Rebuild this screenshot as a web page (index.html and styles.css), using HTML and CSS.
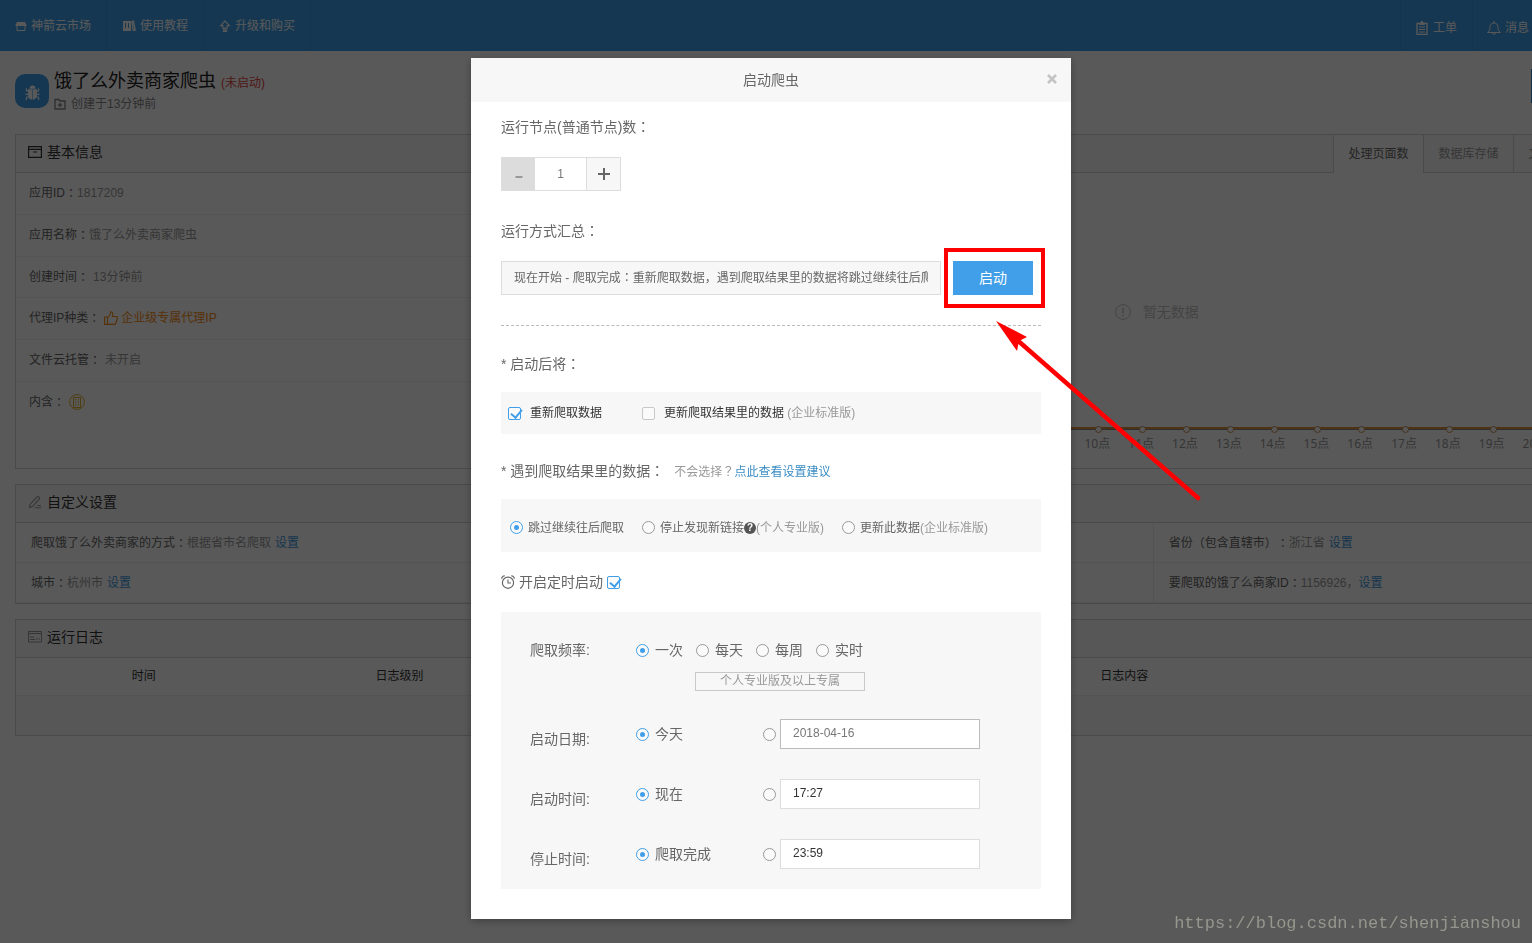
FILE: index.html
```html
<!DOCTYPE html>
<html lang="zh-CN">
<head>
<meta charset="utf-8">
<title>启动爬虫</title>
<link rel="stylesheet" href="styles.css">
</head>
<body>
<div class="page">
  <nav class="nav">
    <a class="nav-item" href="#"><svg class="i12" viewBox="0 0 12 12"><path fill="currentColor" d="M2 2h8l1.500 3v1h-11v-1z"/><path fill="none" stroke="currentColor" d="M2 6v4.500h8V6"/></svg>神箭云市场</a>
    <a class="nav-item" href="#"><svg class="i14" viewBox="0 0 14 14"><path fill="currentColor" fill-rule="evenodd" d="M1 2h8v10H1zM3 4v5h1V4zM6 4v5h1V4z"/><path fill="none" stroke="currentColor" stroke-width="1.400" d="M10 2.500l1.500-.3L13.200 11l-2 .5zM2 10.500h6"/></svg>使用教程</a>
    <a class="nav-item" href="#"><svg class="i12" viewBox="0 0 12 14"><path fill="none" stroke="currentColor" stroke-width="1.300" d="M6 1L1 6.500h2.500v3h5v-3H11zM3.500 11.500h5M3.500 13.300h5"/></svg>升级和购买</a>
    <a class="nav-item nav-right nav-first" href="#"><svg class="i14" viewBox="0 0 14 14"><path fill="none" stroke="currentColor" stroke-width="1.300" d="M2 2.500h10v10.800H2z"/><path fill="currentColor" d="M4.500 1.500h1.500V0h2v1.500h1.500V4h-5z"/><path stroke="currentColor" d="M4 6h6M4 8.500h6M4 11h6"/></svg>工单</a>
    <a class="nav-item nav-right" href="#"><svg class="i14" viewBox="0 0 14 14"><path fill="none" stroke="currentColor" d="M.5 11.500h13c-2-1.500-2.500-3-2.500-5 0-2.700-1.500-4.500-4-4.500s-4 1.800-4 4.500c0 2-.5 3.500-2.500 5zM7 0v2M5.500 12c0 2 3 2 3 0"/></svg>消息</a>
    <span class="nav-rest"></span>
  </nav>

  <header class="app-head">
    <span class="app-icon"><svg viewBox="0 0 16 18"><path fill="currentColor" d="M4.800 5a3.200 3.600 0 0 1 6.400 0zM3.200 5.600h4.500v11.200C4.800 16.600 3.200 14.500 3.200 11.500zM8.300 5.600h4.500v5.900c0 3-1.600 5.100-4.500 5.300z"/><path fill="none" stroke="currentColor" stroke-width="1.200" d="M1.500 4.500v2.800H4M.5 11h3M1.500 17v-2.700L4 13.500M14.500 4.500v2.800H12M15.500 11h-3M14.500 17v-2.700L12 13.500"/></svg></span>
    <div class="app-text">
      <h1>饿了么外卖商家爬虫<small>(未启动)</small></h1>
      <p><svg class="i12" viewBox="0 0 12 12"><path fill="none" stroke="currentColor" stroke-width="1.400" d="M1 1.500h4l1 1.500h5v8H1zM6 5v4M4 7h4"/></svg>创建于13分钟前</p>
    </div>
    <button class="app-btn" type="button" aria-label="启动"></button>
  </header>

  <section class="panel split">
    <div class="info">
      <h2 class="bar"><svg class="i14" viewBox="0 0 14 12"><path fill="none" stroke="currentColor" stroke-width="1.200" d="M.6.6h12.800v10.800H.6zM.6 3.400h12.800M5 6h4"/></svg>基本信息</h2>
      <ul class="facts">
        <li>应用ID<b lang="zh-TW">：</b><span>1817209</span></li>
        <li>应用名称<b lang="zh-TW">：</b><span>饿了么外卖商家爬虫</span></li>
        <li>创建时间<b lang="zh-TW">：</b><span class="sp">13分钟前</span></li>
        <li>代理IP种类<b lang="zh-TW">：</b><em class="sp"><svg class="i14" viewBox="0 0 14 14"><path fill="none" stroke="currentColor" stroke-width="1.100" d="M.6 6h3v7.400h-3zM3.600 6.500C6 5 6.500 3.500 6.800.8c2.500 0 2.200 3 1.600 4.700h4.200c1.200 0 .8 1.500.4 3l-1 3.500c-.3 1-.8 1.400-1.800 1.400H3.600"/></svg>企业级专属代理IP</em></li>
        <li>文件云托管<b lang="zh-TW">：</b><span class="sp">未开启</span></li>
        <li>内含<b lang="zh-TW">：</b><svg class="i16 gold sp" viewBox="0 0 16 16"><circle cx="8" cy="8" r="7.400" fill="none" stroke="currentColor"/><path fill="none" stroke="currentColor" d="M4.500 3.500h7v10h-7z"/><path stroke="currentColor" stroke-dasharray="1.500 1" d="M6.700 5v7M9.300 5v7"/></svg></li>
      </ul>
    </div>
    <div class="chart">
      <div class="bar tabs">
        <button class="tab on" type="button">处理页面数</button>
        <button class="tab" type="button">数据库存储</button>
        <button class="tab" type="button">文件云托管</button>
        <span class="tab-rest"></span>
      </div>
      <p class="nodata"><svg viewBox="0 0 16 16"><circle cx="8" cy="8" r="7.400" fill="none" stroke="currentColor"/><path stroke="currentColor" stroke-width="1.500" d="M8 4v5.500M8 11v1.500"/></svg>暂无数据</p>
      <ol class="axis">
        <li>0点</li><li>1点</li><li>2点</li><li>3点</li><li>4点</li><li>5点</li><li>6点</li><li>7点</li><li>8点</li><li>9点</li><li>10点</li><li>11点</li><li>12点</li><li>13点</li><li>14点</li><li>15点</li><li>16点</li><li>17点</li><li>18点</li><li>19点</li><li>20点</li><li>21点</li><li>22点</li><li>23点</li>
      </ol>
    </div>
  </section>

  <section class="panel">
    <h2 class="bar"><svg class="i14 soft" viewBox="0 0 14 14"><path fill="none" stroke="currentColor" stroke-width="1.100" d="M1.500 12.500L2 9.500 9 1.800c1-1 3.300.8 2.400 2L4.500 11.500zM7 12.700h6M9 10.500h4"/></svg>自定义设置</h2>
    <div class="settings">
      <p>爬取饿了么外卖商家的方式<b lang="zh-TW">：</b><span>根据省市名爬取</span><a class="sp" href="#">设置</a></p>
      <p></p>
      <p>省份<b lang="zh-TW">（</b>包含直辖市<b lang="zh-TW">）：</b><span>浙江省</span><a class="sp" href="#">设置</a></p>
      <p>城市<b lang="zh-TW">：</b><span>杭州市</span><a class="sp" href="#">设置</a></p>
      <p></p>
      <p>要爬取的饿了么商家ID<b lang="zh-TW">：</b><span>1156926，</span><a href="#">设置</a></p>
    </div>
  </section>

  <section class="panel">
    <h2 class="bar"><svg class="i14 soft" viewBox="0 0 14 12"><path fill="none" stroke="currentColor" d="M.5.5h13v10.500H.5zM.5 2.500h13M2 6h4M2 8.500h5M8 8h1.500M10.500 8H12"/></svg>运行日志</h2>
    <table class="log">
      <thead><tr><th class="w15">时间</th><th class="w15">日志级别</th><th>日志内容</th></tr></thead>
      <tbody><tr><td colspan="3"></td></tr></tbody>
    </table>
  </section>
</div>

<div class="overlay">
  <form class="modal">
    <header class="modal-head">
      <h2>启动爬虫</h2>
      <button class="close" type="button" aria-label="关闭"><svg viewBox="0 0 10 10"><path stroke="currentColor" stroke-width="2.600" d="M1 1l8 8M9 1L1 9"/></svg></button>
    </header>
    <div class="modal-body">
      <label class="title" for="nodes">运行节点(普通节点)数<b lang="zh-TW">：</b></label>
      <div class="stepper">
        <button class="minus" type="button" aria-label="减少"><svg viewBox="0 0 14 14"><path stroke="currentColor" stroke-width="2" d="M3.500 10h7"/></svg></button>
        <input id="nodes" type="text" value="1">
        <button type="button" aria-label="增加"><svg viewBox="0 0 14 14"><path stroke="currentColor" stroke-width="2" d="M1 7h12M7 1v12"/></svg></button>
      </div>

      <div class="title" id="summary-title">运行方式汇总<b lang="zh-TW">：</b></div>
      <div class="run">
        <div class="summary" role="textbox" aria-readonly="true" aria-labelledby="summary-title"><span>现在开始 - 爬取完成<b lang="zh-TW">：</b>重新爬取数据，遇到爬取结果里的数据将跳过继续往后爬取</span></div>
        <div class="go-wrap"><button class="go" type="button">启动</button></div>
      </div>

      <div class="line"></div>
      <div class="title first">* 启动后将<b lang="zh-TW">：</b></div>
      <div class="box checks">
        <label><input type="checkbox" checked>重新爬取数据</label>
        <label><input type="checkbox">更新爬取结果里的数据<span class="note">&nbsp;(企业标准版)</span></label>
      </div>

      <div class="title second">* 遇到爬取结果里的数据<b lang="zh-TW">：</b><span class="hint">不会选择<b lang="zh-TW">？</b><a href="#">点此查看设置建议</a></span></div>
      <div class="box radios">
        <label><input type="radio" name="dup" checked>跳过继续往后爬取</label>
        <label><input type="radio" name="dup">停止发现新链接<span class="q">?</span><span class="note">(个人专业版)</span></label>
        <label><input type="radio" name="dup">更新此数据<span class="note">(企业标准版)</span></label>
      </div>

      <label class="title timer"><svg viewBox="0 0 14 14"><circle cx="7" cy="7.700" r="5.600" fill="none" stroke="currentColor" stroke-width="1.200"/><path fill="none" stroke="currentColor" stroke-width="1.100" d="M7 4.500V8h3M.6 3.800C.8 2 2 1 3.800.8M13.400 3.800C13.200 2 12 1 10.200.8"/></svg>开启定时启动<input type="checkbox" checked></label>

      <div class="box schedule">
        <div class="freq">
          <span>爬取频率:</span>
          <div class="opts">
            <label><input type="radio" name="freq" checked>一次</label>
            <label><input type="radio" name="freq">每天</label>
            <label><input type="radio" name="freq">每周</label>
            <label><input type="radio" name="freq">实时</label>
          </div>
        </div>
        <div class="badge">个人专业版及以上专属</div>
        <div class="row">
          <span>启动日期:</span>
          <label><input type="radio" name="date" checked>今天</label>
          <div class="field"><input type="radio" name="date" aria-label="指定日期"><input class="date" type="text" value="2018-04-16" aria-label="启动日期"></div>
        </div>
        <div class="row">
          <span>启动时间:</span>
          <label><input type="radio" name="start" checked>现在</label>
          <div class="field"><input type="radio" name="start" aria-label="指定时间"><input type="text" value="17:27" aria-label="启动时间"></div>
        </div>
        <div class="row">
          <span>停止时间:</span>
          <label><input type="radio" name="stop" checked>爬取完成</label>
          <div class="field"><input type="radio" name="stop" aria-label="指定停止时间"><input type="text" value="23:59" aria-label="停止时间"></div>
        </div>
      </div>
    </div>
    <svg class="arrow" viewBox="0 0 208 182"><path fill="none" stroke="#f00" stroke-width="4.500" stroke-linecap="round" d="M20 18L202 177"/><path fill="#f00" d="M0 0l31 16-8 4-2 10z"/></svg>
  </form>
</div>
<div class="mark">https://blog.csdn.net/shenjianshou</div>
</body>
</html>
```

FILE: styles.css
```css
* { box-sizing: border-box; }
html, body { height: 100%; }
body {
  margin: 0;
  overflow: hidden;
  background: #fff;
  color: #666;
  font: 12px/20px "Liberation Sans", "Noto Sans CJK SC", sans-serif;
  text-spacing-trim: space-all;
}
h1, h2, p, ul, ol { margin: 0; padding: 0; font-weight: normal; }
ul, ol { list-style: none; }
a { color: #3e97dc; text-decoration: none; }
em { font-style: normal; }
b { font-weight: normal; }
b:lang(zh-TW) { font-family: "Noto Sans CJK TC", sans-serif; line-height: 1; }
button, input { font: inherit; margin: 0; padding: 0; border: 0; border-radius: 0; }
svg { flex: none; display: block; overflow: visible; }
.i12 { width: 12px; height: 12px; }
.i14 { width: 14px; height: 14px; }
.i16 { width: 16px; height: 16px; }
.sp { margin-left: 4px; }

/* Background page */
.page { min-width: 1737px; }
.nav { display: flex; height: 51px; background: #409fe8; }
.nav-item {
  display: flex;
  align-items: center;
  gap: 4px;
  padding: 0 15px;
  border-right: 1px solid #3a95dc;
  color: #fff;
}
.nav-right { padding: 4px 15px 0 14px; }
.nav-first { margin-left: auto; border-left: 1px solid #3a95dc; }
.nav-rest { width: 192px; }

.app-head { display: flex; height: 83px; padding: 18px 15px 0; }
.app-icon {
  display: flex;
  align-items: center;
  justify-content: center;
  width: 34px;
  height: 34px;
  margin-top: 5px;
  border-radius: 10px;
  background: #409fe8;
  color: #fff;
}
.app-icon svg { width: 15px; height: 17px; margin-top: 3px; }
.app-text { margin-left: 5px; }
.app-text h1 { font-size: 18px; line-height: 24px; color: #222; }
.app-text small { margin-left: 5px; font-size: 12px; color: #e64545; }
.app-text p { display: flex; align-items: center; gap: 5px; line-height: 18px; color: #888; }
.app-btn { width: 191px; height: 34px; margin-left: auto; background: #2f8ad2; }

.panel { margin: 0 15px 15px; border: 1px solid #d2d4d8; background: #fff; }
.bar {
  display: flex;
  align-items: center;
  gap: 5px;
  height: 38px;
  padding: 0 12px 4px;
  border-bottom: 1px solid #d2d4d8;
  background: #f9f9f9;
  color: #333;
  font-size: 14px;
}
.soft { color: #999; }
.split { display: grid; grid-template-columns: 1fr 2fr; height: 335px; }
.facts { display: flex; flex-direction: column; height: 250px; }
.facts li {
  display: flex;
  flex: 1;
  align-items: center;
  padding: 0 13px 1px;
  border-bottom: 1px solid #f0f0f0;
}
.facts li:last-child { border-bottom: 0; }
.facts span { color: #999; }
.facts em { display: flex; align-items: center; gap: 3px; color: #f78b13; }
.gold { color: #e0b32a; }

.chart { border-left: 1px solid #eee; }
.tabs { justify-content: flex-end; gap: 0; padding: 0; }
.tab {
  width: 90px;
  height: 38px;
  border-left: 1px solid #d2d4d8;
  border-bottom: 1px solid #d2d4d8;
  margin-bottom: -1px;
  background: #f9f9f9;
  color: #999;
  font-size: 12px;
}
.tab.on { background: #fff; border-bottom-color: #fff; color: #666; }
.tab-rest { width: 118px; height: 38px; border-left: 1px solid #d2d4d8; }
.nodata {
  display: flex;
  align-items: center;
  justify-content: center;
  gap: 12px;
  padding: 129px 0 105px 7px;
  color: #c4c4c4;
  font-size: 14px;
}
.nodata svg { width: 16px; height: 16px; }
.axis { display: flex; padding: 0 32px 0 52px; }
.axis li {
  position: relative;
  flex: 1;
  padding-top: 5px;
  border-top: 2px solid #e08f3a;
  box-shadow: inset 0 1px #888;
  color: #999;
  font-family: "Noto Sans", "Noto Sans CJK SC", sans-serif;
  text-align: center;
}
.axis li::before {
  content: "";
  position: absolute;
  left: calc(50% - 2px);
  top: -3px;
  width: 5px;
  height: 5px;
  border: 1px solid #c89058;
  border-radius: 50%;
  background: #fff;
}

.settings { display: grid; grid-template-columns: repeat(3, 1fr); }
.settings p {
  display: flex;
  align-items: center;
  height: 40px;
  padding: 0 15px;
  border-left: 1px solid #eee;
  border-bottom: 1px solid #eee;
}
.settings p:nth-child(3n+1) { border-left: 0; }
.settings span { color: #999; }

.log { width: 100%; border-spacing: 0; table-layout: fixed; }
.log th { height: 38px; padding: 0 0 2px; border-bottom: 1px solid #eee; color: #333; font-weight: normal; }
.log td { height: 39px; padding: 0; background: #f9f9f9; }
.w15 { width: 15%; }

/* Dialog */
.overlay {
  position: fixed;
  inset: 0;
  display: flex;
  align-items: flex-start;
  justify-content: center;
  padding: 58px 0 0 10px;
  background: rgba(0, 0, 0, .65);
}
.modal { position: relative; width: 600px; background: #fff; box-shadow: 0 2px 8px rgba(0, 0, 0, .3); }
.modal-head { display: flex; align-items: center; height: 44px; padding: 0 14px 0 24px; background: #f7f7f7; }
.modal-head h2 { flex: 1; font-size: 14px; text-align: center; }
.close { width: 10px; padding-bottom: 2px; background: none; color: #c4c4c4; }
.modal-body { padding: 15px 30px 30px; }
.title { display: block; height: 20px; color: #666; font-size: 14px; }

.stepper {
  display: flex;
  width: 120px;
  height: 34px;
  margin: 20px 0 30px;
  border: 1px solid #ddd;
}
.stepper button { display: flex; align-items: center; justify-content: center; width: 33px; background: #f7f7f7; color: #666; }
.stepper svg { width: 14px; height: 14px; }
.stepper .minus { background: #dcdcdc; color: #999; }
.stepper input { flex: 1; min-width: 0; border-right: 1px solid #ddd; color: #777; text-align: center; }

.run { display: flex; align-items: center; margin: 20px 0 30px; }
.summary {
  flex: 1;
  min-width: 0;
  height: 34px;
  padding: 0 12px;
  border: 1px solid #ddd;
  background: #f7f7f7;
  color: #666;
  line-height: 32px;
}
.summary span { display: block; overflow: hidden; white-space: nowrap; }
.go-wrap { position: relative; margin: 0 8px 0 12px; }
.go-wrap::after { content: ""; position: absolute; inset: -13px -12px -13px -9px; border: 4px solid #f00; pointer-events: none; }
.go { display: block; width: 80px; height: 34px; background: #409fe8; color: #fff; font-size: 14px; }
.arrow { position: absolute; left: 525px; top: 263px; width: 208px; height: 182px; pointer-events: none; }

.line { border-top: 1px dashed #bbb; }
.first { margin-top: 28px; }
.second { margin-top: 27px; }
.hint { margin-left: 10px; color: #999; font-size: 12px; }
.hint a { color: #3b8dc4; }
.box { display: flex; margin-top: 18px; background: #f7f7f7; }
.box label { display: flex; align-items: center; }
.note { color: #999; }
.checks { gap: 40px; height: 42px; padding: 0 7px; color: #333; }
.checks label { gap: 9px; }
.checks .note { margin-left: -9px; }
.radios { gap: 18px; height: 53px; padding: 4px 9px 0; }
.radios input { margin-right: 5px; }
.q {
  width: 12px;
  height: 12px;
  border-radius: 50%;
  background: #555;
  color: #fff;
  font-weight: bold;
  font-size: 10px;
  line-height: 12px;
  text-align: center;
}
.timer { display: flex; align-items: center; margin-top: 20px; }
.timer svg { width: 14px; height: 14px; margin-right: 4px; }
.timer input { margin-left: 4px; }

input[type="checkbox"], input[type="radio"] {
  appearance: none;
  position: relative;
  flex: none;
  width: 13px;
  height: 13px;
  border: 1px solid #c8c8c8;
  border-radius: 2px;
  background: #fafafa;
}
input[type="radio"] { border-color: #999; border-radius: 50%; }
input[type="checkbox"]:checked, input[type="radio"]:checked { border-color: #409fe8; }
input[type="checkbox"]:checked::before {
  content: "";
  position: absolute;
  left: 2px;
  top: 1px;
  width: 9px;
  height: 5px;
  border: solid #409fe8;
  border-width: 0 0 2px 2px;
  transform: rotate(-50deg);
}
input[type="radio"]:checked::before {
  content: "";
  position: absolute;
  inset: 3px;
  border-radius: 50%;
  background: #409fe8;
}

.schedule { display: block; margin-top: 20px; padding: 28px 29px 20px; font-size: 14px; }
.freq { display: flex; }
.freq > span { width: 106px; }
.opts { display: flex; gap: 13px; }
.schedule label { gap: 6px; }
.badge {
  width: 170px;
  height: 19px;
  margin: 12px 0 28px 165px;
  border: 1px solid #c8c8c8;
  color: #999;
  font-size: 12px;
  line-height: 16px;
  text-align: center;
}
.row { display: grid; grid-template-columns: 106px 127px 1fr; grid-template-rows: 30px; }
.row + .row { margin-top: 30px; }
.row > span { line-height: 40px; }
.field { display: flex; align-items: center; gap: 4px; }
.field input[type="text"] {
  width: 200px;
  height: 30px;
  padding: 0 12px 2px;
  border: 1px solid #ddd;
  background: #fff;
  color: #333;
  font-size: 12px;
}
.field input.date { border-color: #bbb; color: #777; }

.mark {
  position: fixed;
  right: 11px;
  bottom: 7px;
  color: #96968e;
  font: 17px/24px "Liberation Mono", monospace;
}
```
